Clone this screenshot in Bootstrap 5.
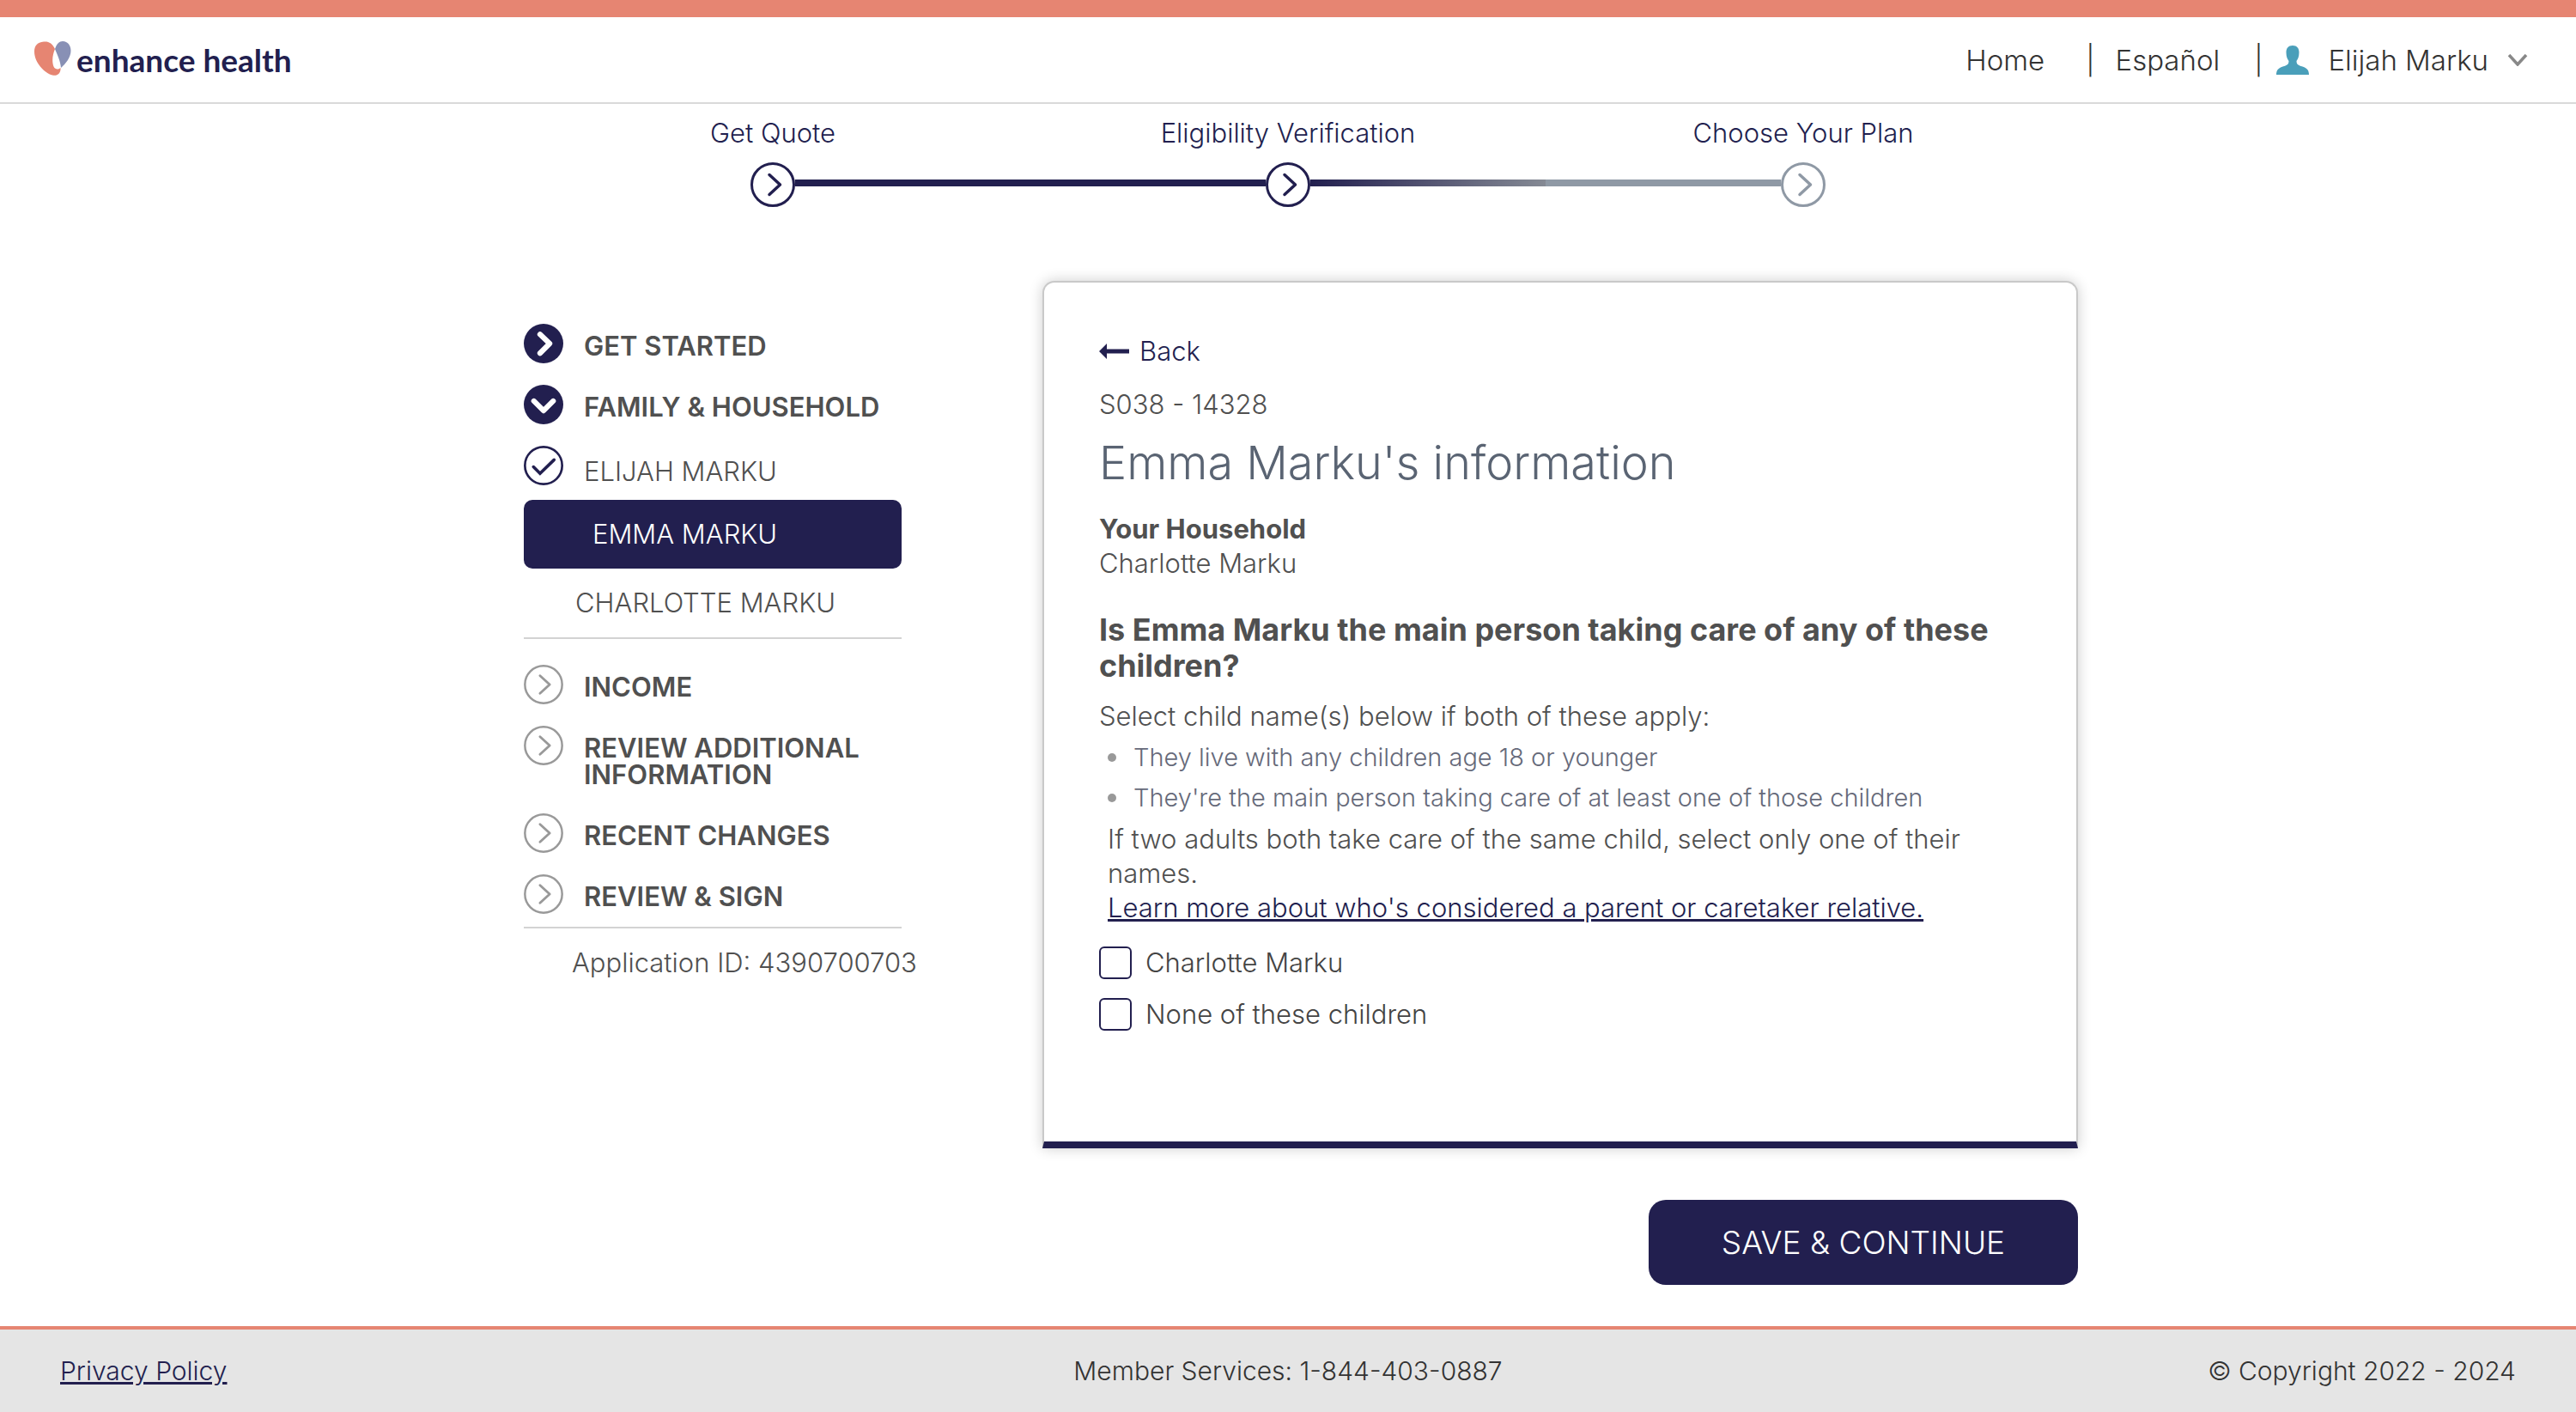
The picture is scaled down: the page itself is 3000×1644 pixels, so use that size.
<!DOCTYPE html>
<html lang="en">
<head>
<meta charset="utf-8">
<meta name="viewport" content="width=device-width, initial-scale=1">
<title>Enhance Health - Eligibility Verification</title>
<link href="https://cdn.jsdelivr.net/npm/bootstrap@5.3.0/dist/css/bootstrap.min.css" rel="stylesheet">
<style>
:root{--navy:#221f4f;--coral:#e68572;--ink:#505050;--rule:#d3d3d3;--slate:#8f99a5}
body{font-family:Inter,"Liberation Sans",sans-serif;font-size:31px;line-height:40px;font-weight:300;color:var(--ink);background:#fff}
a{color:var(--navy)}
svg{display:block;flex:none}
.site-head{border-top:20px solid var(--coral);border-bottom:2px solid #d9d9d9;height:121px;padding:0 56px 0 40px}
.brand{font-family:Lato,"Liberation Sans",sans-serif;font-weight:700;font-size:37px;color:var(--navy);gap:6px}
.brand svg{margin-bottom:4px}
.top-links{color:#333;font-size:33px}
.top-links a,.top-links button{color:#333;text-decoration:none}
.user-btn{border:0;background:none;padding:0;font-weight:300;gap:22px}
.stepper{width:60%;margin:0 auto;padding-top:14px}
.step-item{flex:1 1 0;text-align:center;color:var(--navy)}
.step-track{margin-top:14px}
.step-next{color:var(--slate)}
.step-line{height:8px;flex:1;margin-bottom:4px}
.line-done{background:var(--navy)}
.line-half{background:linear-gradient(90deg,var(--navy),#858a94)}
.line-todo{background:var(--slate)}
.main-wrap{max-width:1840px;margin:86px auto 0;padding-left:30px}
.main-form{flex:0 1 1206px}
.side-nav{flex:0 0 440px;min-width:0;width:440px;padding-top:50px}
.side-row{gap:24px;line-height:31px;font-weight:600;color:var(--ink);text-decoration:none;padding-bottom:25px}
.side-row svg{color:#999}
.side-row span{padding:10px 0 5px;text-transform:uppercase}
.side-row.person{font-weight:300;padding-bottom:16px}
.side-row.person span{padding:14px 0 2px}
.side-row.last-row{padding-bottom:15px}
.side-pill{display:block;background:var(--navy);color:#fff;border-radius:10px;line-height:80px;padding-left:80px;text-decoration:none}
.side-pill:hover{color:#fff}
.side-sub{display:block;line-height:80px;padding-left:60px;color:var(--ink);text-decoration:none}
.side-rule{border-top:2px solid var(--rule)}
.side-gap{margin-bottom:30px}
.app-id{padding:20px 0 0 56px;white-space:nowrap}
.form-panel{border:2px solid #c9c9c9;border-bottom:8px solid var(--navy);border-radius:14px 14px 0 0;box-shadow:0 0 16px rgba(0,0,0,.2);background:#fff;padding:58px 60px 128px 64px}
.back-link{gap:12px;text-decoration:none}
.screen-id{margin-top:22px}
.page-title{font-size:54px;line-height:60px;font-weight:300;color:#5a6473;margin:18px 0 27px}
.question{font-size:36px;line-height:42px;font-weight:700;margin:36px 0 18px}
.rule-list{list-style:none;padding:0 0 0 10px;margin:4px 0 5px;font-size:29px;line-height:47px;color:#666a7a}
.rule-list li{display:flex;align-items:center;gap:20px}
.rule-list li::before{content:"";width:10px;height:10px;border-radius:50%;background:#999}
.indent{padding-left:10px}
.check-row{gap:16px;margin-bottom:20px;color:#444}
.check-row .form-check-input{width:38px;height:38px;margin:0;border:2px solid var(--navy);border-radius:6px;flex:none}
.btn-save{background:var(--navy);color:#fff;font-size:37px;font-weight:300;width:500px;height:99px;border-radius:20px;margin-top:60px}
.btn-save:hover{background:#35316e;color:#fff}
.site-foot{border-top:4px solid var(--coral);background:#e5e5e5;font-size:30px;padding:28px 70px;margin-top:48px;color:#333}
</style>
</head>
<body>
<svg width="0" height="0" class="position-absolute" aria-hidden="true">
  <symbol id="ring-next" viewBox="0 0 52 52"><circle cx="26" cy="26" r="24.5" fill="#fff" stroke="currentColor" stroke-width="3"/><path d="M22 14.5l12.5 11.5L22 37.5" fill="none" stroke="currentColor" stroke-width="3.5" stroke-linecap="round" stroke-linejoin="round"/></symbol>
  <symbol id="ring-small" viewBox="0 0 45 45"><circle cx="22.5" cy="22.5" r="21.2" fill="none" stroke="currentColor" stroke-width="2.4"/><path d="M18.5 12.5l11 10-11 10" fill="none" stroke="currentColor" stroke-width="2.8" stroke-linecap="round" stroke-linejoin="round"/></symbol>
</svg>

<header class="site-head d-flex align-items-center justify-content-between">
  <a href="#" class="brand d-flex align-items-center text-decoration-none">
    <svg width="43" height="40" viewBox="0 0 43 40" aria-hidden="true"><path d="M24 9C21 2.500 17 0 11 .5 3 1 0 6 0 12c0 13 12 25 21 27.500 6 1.500 10-2.500 9.500-8.500-2 2-6 2.500-8-1.500C20 23 21.500 15 24 9z" fill="#e68572"/><path d="M24 9c2-6 5-9 9-9 6 0 9.500 5 9.500 11 0 8-6 15-11.500 20-.5-7-4-15-7-22z" fill="#8890b5"/></svg>
    <span>enhance health</span>
  </a>
  <nav class="top-links d-flex align-items-center">
    <a href="#">Home</a><span class="ms-5 me-4">|</span><a href="#">Español</a><span class="ms-4 me-3 ps-3">|</span>
    <button type="button" class="user-btn d-flex align-items-center">
      <svg width="38" height="34" viewBox="0 0 38 34" aria-hidden="true"><path d="M19 0c5 0 7.500 3 7.500 8 0 5-1.500 8-3 10 0 4 2 5 7 6.500 6 2 7.500 5 7.500 9.500H0c0-4.500 1.500-7.500 7.500-9.500 5-1.500 7-2.500 7-6.500-1.500-2-3-5-3-10 0-5 2.500-8 7.500-8z" fill="#4a9fba"/></svg>
      <span>Elijah Marku</span>
      <svg width="24" height="14" viewBox="0 0 24 14" aria-hidden="true"><path d="M2 1l10 11L22 1" fill="none" stroke="#888" stroke-width="3.5"/></svg>
    </button>
  </nav>
</header>

<section class="stepper d-flex" aria-label="Progress">
  <div class="step-item">Get Quote
    <div class="step-track d-flex align-items-center"><span class="step-line"></span><svg width="52" height="52"><use href="#ring-next"/></svg><span class="step-line line-done"></span></div>
  </div>
  <div class="step-item">Eligibility Verification
    <div class="step-track d-flex align-items-center"><span class="step-line line-done"></span><svg width="52" height="52"><use href="#ring-next"/></svg><span class="step-line line-half"></span></div>
  </div>
  <div class="step-item">Choose Your Plan
    <div class="step-track step-next d-flex align-items-center"><span class="step-line line-todo"></span><svg width="52" height="52"><use href="#ring-next"/></svg><span class="step-line"></span></div>
  </div>
</section>

<main class="main-wrap d-flex align-items-start justify-content-between">
  <nav class="side-nav" aria-label="Application sections">
    <a href="#" class="side-row d-flex align-items-start"><svg width="46" height="46" viewBox="0 0 45 45" aria-hidden="true"><circle cx="22.5" cy="22.5" r="22.5" fill="#221f4f"/><path d="M18.500 12l11 10.500-11 11" fill="none" stroke="#fff" stroke-width="6" stroke-linecap="round" stroke-linejoin="round"/></svg><span>Get Started</span></a>
    <a href="#" class="side-row d-flex align-items-start"><svg width="46" height="46" viewBox="0 0 45 45" aria-hidden="true"><circle cx="22.5" cy="22.5" r="22.5" fill="#221f4f"/><path d="M11.500 18.500l11 11 11-11" fill="none" stroke="#fff" stroke-width="6" stroke-linecap="round" stroke-linejoin="round"/></svg><span>Family &amp; Household</span></a>
    <a href="#" class="side-row person d-flex align-items-start"><svg width="46" height="46" viewBox="0 0 45 45" aria-hidden="true"><circle cx="22.5" cy="22.5" r="21.2" fill="#fff" stroke="#221f4f" stroke-width="2.6"/><path d="M11 24l7.500 7.500L34.500 16" fill="none" stroke="#221f4f" stroke-width="3.5" stroke-linecap="round"/></svg><span>Elijah Marku</span></a>
    <a href="#" class="side-pill" aria-current="page">EMMA MARKU</a>
    <a href="#" class="side-sub">CHARLOTTE MARKU</a>
    <div class="side-rule side-gap"></div>
    <a href="#" class="side-row d-flex align-items-start"><svg width="46" height="46"><use href="#ring-small"/></svg><span>Income</span></a>
    <a href="#" class="side-row d-flex align-items-start"><svg width="46" height="46"><use href="#ring-small"/></svg><span>Review Additional Information</span></a>
    <a href="#" class="side-row d-flex align-items-start"><svg width="46" height="46"><use href="#ring-small"/></svg><span>Recent Changes</span></a>
    <a href="#" class="side-row last-row d-flex align-items-start"><svg width="46" height="46"><use href="#ring-small"/></svg><span>Review &amp; Sign</span></a>
    <div class="side-rule"></div>
    <div class="app-id">Application ID: 4390700703</div>
  </nav>

  <form class="main-form">
    <div class="form-panel">
      <a href="#" class="back-link d-inline-flex align-items-center"><svg width="35" height="18" viewBox="0 0 35 18" aria-hidden="true"><path d="M0 9l9-9v6.500h26v5H9V18z" fill="#221f4f"/></svg>Back</a>
      <div class="screen-id">S038 - 14328</div>
      <h1 class="page-title">Emma Marku's information</h1>
      <div class="fw-bold">Your Household</div>
      <div>Charlotte Marku</div>
      <h2 class="question">Is Emma Marku the main person taking care of any of these children?</h2>
      <div>Select child name(s) below if both of these apply:</div>
      <ul class="rule-list">
        <li>They live with any children age 18 or younger</li>
        <li>They're the main person taking care of at least one of those children</li>
      </ul>
      <div class="indent">If two adults both take care of the same child, select only one of their names.</div>
      <div class="indent mb-4"><a href="#">Learn more about who's considered a parent or caretaker relative.</a></div>
      <div class="check-row d-flex align-items-center"><input class="form-check-input" type="checkbox" id="child-charlotte"><label for="child-charlotte">Charlotte Marku</label></div>
      <div class="check-row d-flex align-items-center mb-0"><input class="form-check-input" type="checkbox" id="child-none"><label for="child-none">None of these children</label></div>
    </div>
    <div class="text-end"><button type="submit" class="btn btn-save">SAVE &amp; CONTINUE</button></div>
  </form>
</main>

<footer class="site-foot row g-0">
  <div class="col"><a href="#">Privacy Policy</a></div>
  <div class="col text-center">Member Services: 1-844-403-0887</div>
  <div class="col text-end">© Copyright 2022 - 2024</div>
</footer>
<script src="https://cdn.jsdelivr.net/npm/bootstrap@5.3.0/dist/js/bootstrap.bundle.min.js"></script>
</body>
</html>
